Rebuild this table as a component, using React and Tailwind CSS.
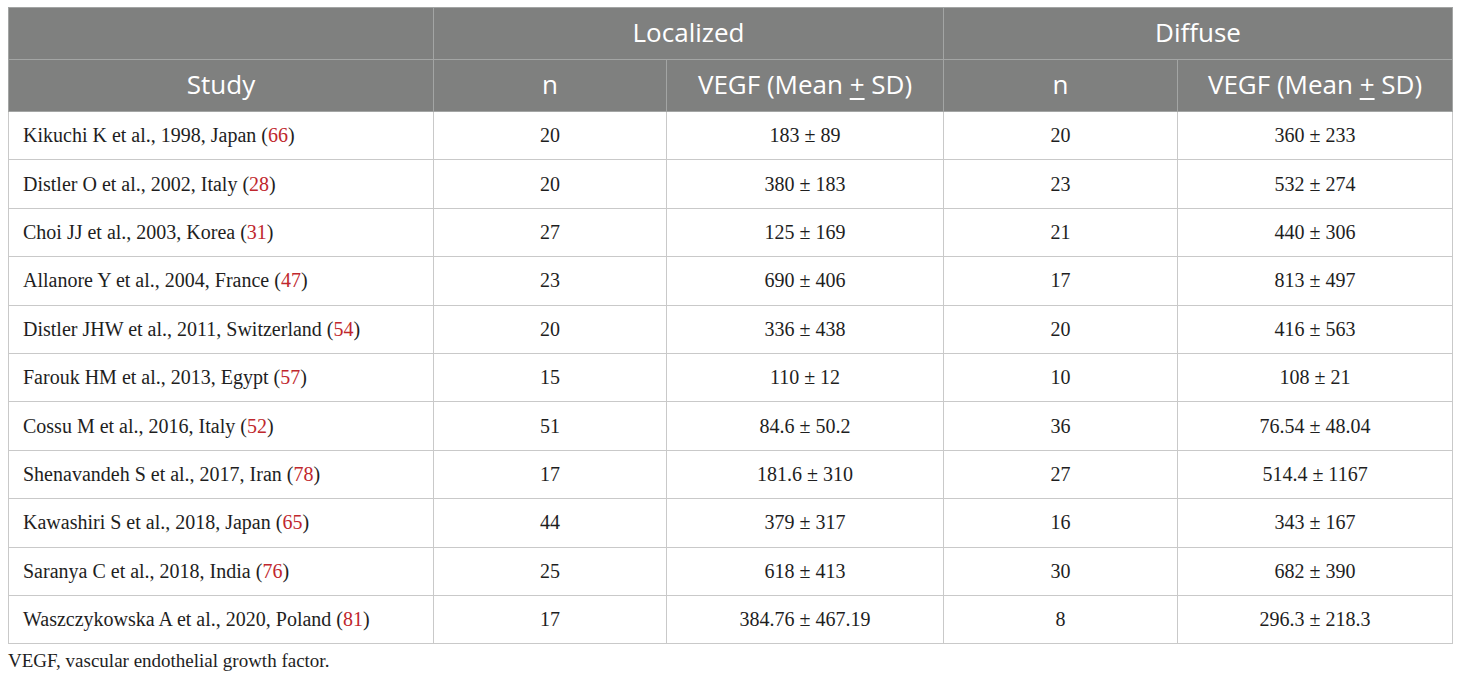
import React from 'react';

const rows = [
  ['Kikuchi K et al., 1998, Japan', '66', '20', '183 ± 89', '20', '360 ± 233'],
  ['Distler O et al., 2002, Italy', '28', '20', '380 ± 183', '23', '532 ± 274'],
  ['Choi JJ et al., 2003, Korea', '31', '27', '125 ± 169', '21', '440 ± 306'],
  ['Allanore Y et al., 2004, France', '47', '23', '690 ± 406', '17', '813 ± 497'],
  ['Distler JHW et al., 2011, Switzerland', '54', '20', '336 ± 438', '20', '416 ± 563'],
  ['Farouk HM et al., 2013, Egypt', '57', '15', '110 ± 12', '10', '108 ± 21'],
  ['Cossu M et al., 2016, Italy', '52', '51', '84.6 ± 50.2', '36', '76.54 ± 48.04'],
  ['Shenavandeh S et al., 2017, Iran', '78', '17', '181.6 ± 310', '27', '514.4 ± 1167'],
  ['Kawashiri S et al., 2018, Japan', '65', '44', '379 ± 317', '16', '343 ± 167'],
  ['Saranya C et al., 2018, India', '76', '25', '618 ± 413', '30', '682 ± 390'],
  ['Waszczykowska A et al., 2020, Poland', '81', '17', '384.76 ± 467.19', '8', '296.3 ± 218.3'],
];

// header cell text in the grey band
const th = 'border border-[#a3a5a4] font-normal text-white text-[26px] leading-none text-center align-middle pb-[3px]';
const td = 'border border-[#c9c9c9] text-center align-middle pb-[1px]';

function VegfLabel() {
  return (
    <span>
      VEGF (Mean <span className="underline underline-offset-4">+</span> SD)
    </span>
  );
}

export default function App() {
  return (
    <div className="bg-white w-[1460px] h-[680px] pt-[7px] pl-[8px]" style={{ fontFamily: '"Liberation Serif", serif' }}>
      <table className="border-collapse table-fixed w-[1444px] text-[#1e1e1e] text-[20px] leading-none">
        <colgroup>
          <col className="w-[425px]" />
          <col className="w-[233px]" />
          <col className="w-[277px]" />
          <col className="w-[234px]" />
          <col className="w-[275px]" />
        </colgroup>
        <thead className="bg-[#7f807f]" style={{ fontFamily: '"Open Sans", sans-serif' }}>
          <tr className="h-[52px]">
            <th className={th}></th>
            <th className={th} colSpan={2}>Localized</th>
            <th className={th} colSpan={2}>Diffuse</th>
          </tr>
          <tr className="h-[52px]">
            <th className={th}>Study</th>
            <th className={th}>n</th>
            <th className={th}><VegfLabel /></th>
            <th className={th}>n</th>
            <th className={th}><VegfLabel /></th>
          </tr>
        </thead>
        <tbody>
          {rows.map((r, i) => (
            <tr key={i} className="h-[48.4px]">
              <td className="border border-[#c9c9c9] text-left align-middle pl-[14px] pb-[1px]">
                {r[0]} (<span className="text-[#c0272d]">{r[1]}</span>)
              </td>
              <td className={td}>{r[2]}</td>
              <td className={td}>{r[3]}</td>
              <td className={td}>{r[4]}</td>
              <td className={td}>{r[5]}</td>
            </tr>
          ))}
        </tbody>
      </table>
      <p className="mt-[7px] text-[19px] leading-none text-[#1e1e1e]">VEGF, vascular endothelial growth factor.</p>
    </div>
  );
}
